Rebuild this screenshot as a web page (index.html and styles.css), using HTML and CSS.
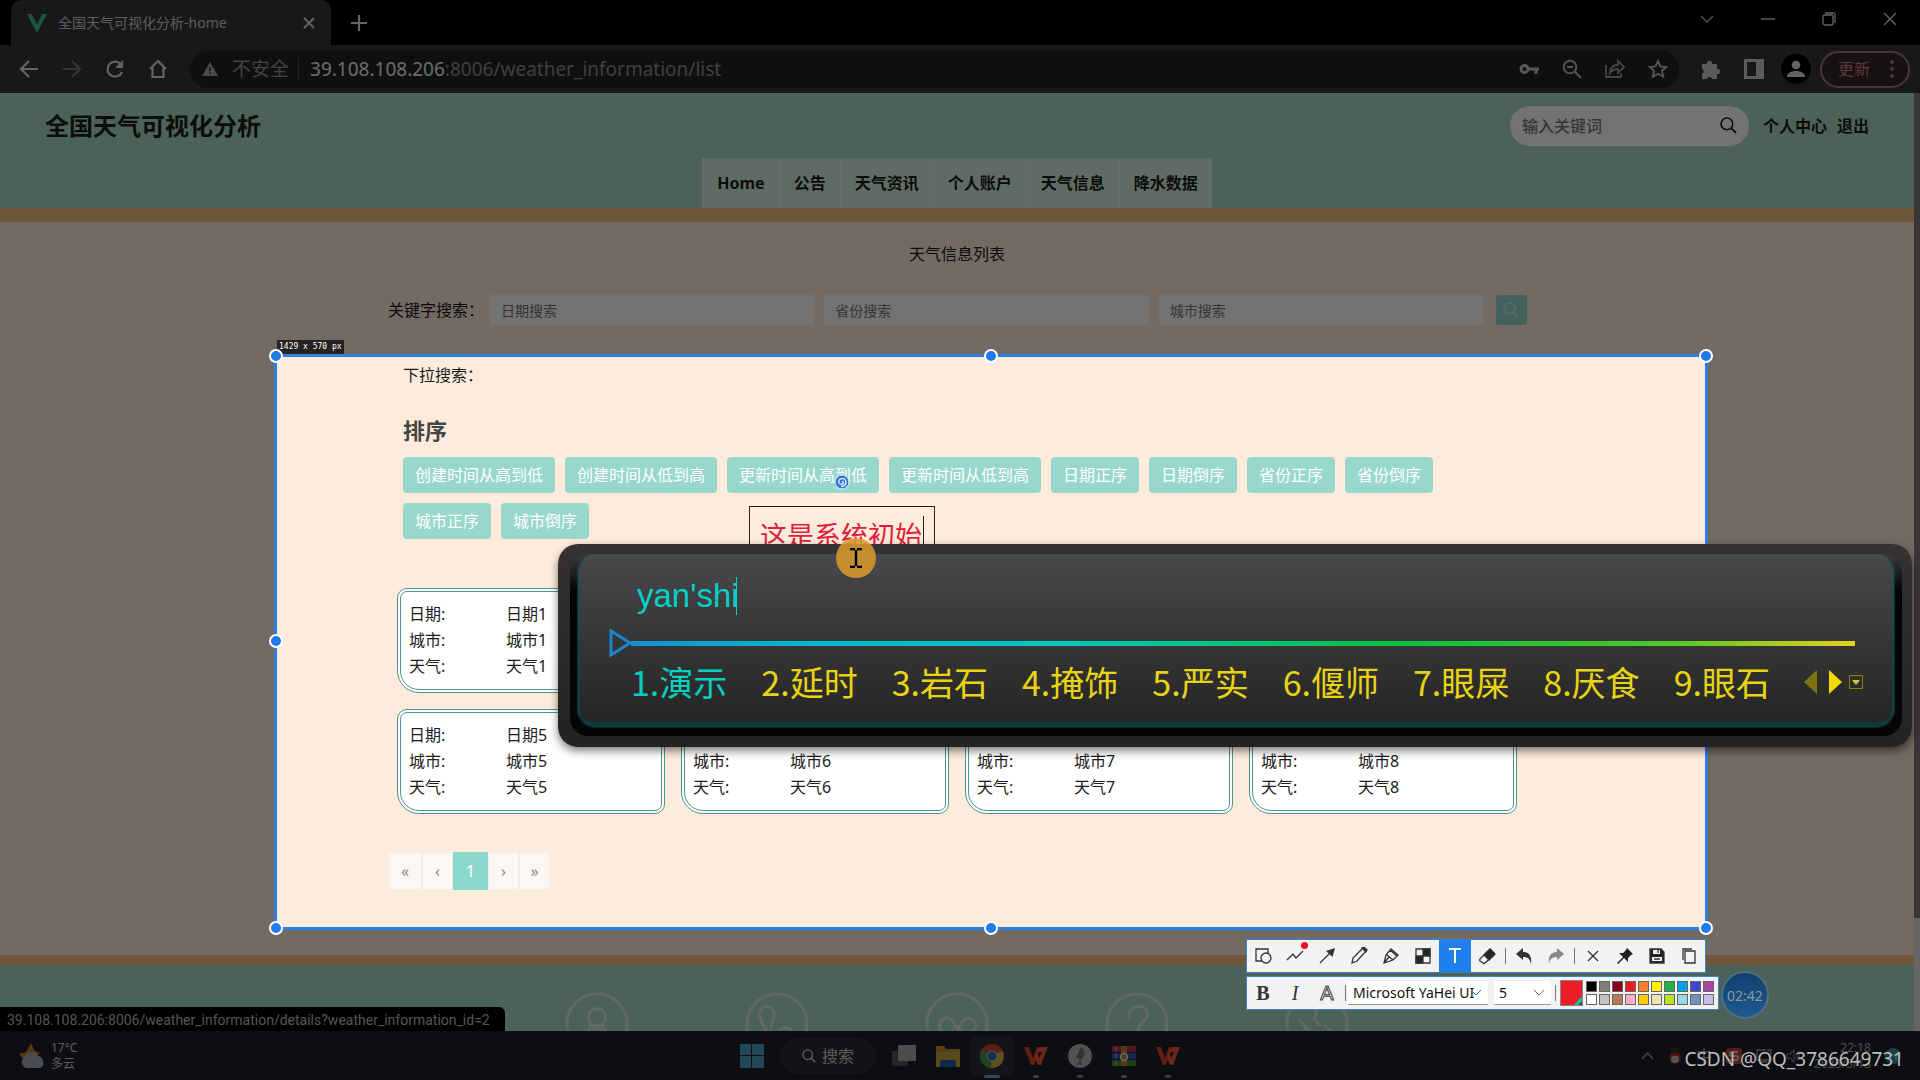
FILE: index.html
```html
<!DOCTYPE html>
<html lang="zh-CN">
<head>
<meta charset="utf-8">
<meta name="viewport" content="width=device-width, initial-scale=1">
<title>全国天气可视化分析-home</title>
<link rel="stylesheet" href="styles.css">
</head>
<body>
<svg class="defs" aria-hidden="true">
  <symbol id="wps" viewBox="0 0 24 20"><path d="M0 1h5l4 11 4-11h4l-7 18H7z" fill="#d8402c"/><path d="M13 6l4-5h7l-7 18h-3l-3-7 2-6 2 6 3-6z" fill="#ee5a3a"/></symbol>
  <symbol id="glass" viewBox="0 0 16 16"><circle cx="6.500" cy="6.500" r="5.500" fill="none" stroke="currentColor" stroke-width="1.500"/><path d="M10.500 10.500L15 15" stroke="currentColor" stroke-width="1.800"/></symbol>
</svg>

<header class="chrome">
  <div class="tabstrip">
    <div class="tab">
      <svg width="20" height="20" viewBox="0 0 20 20"><path d="M0 1h5l5 10 5-10h5L10 20z" fill="#3fb984"/><path d="M5 1h3l2 4 2-4h3l-5 10z" fill="#35363a"/></svg>
      <span class="tab-title">全国天气可视化分析-home</span>
      <button class="icon-btn" aria-label="关闭标签页"><svg width="12" height="12" viewBox="0 0 12 12"><path d="M1 1l10 10M11 1L1 11" stroke="#ddd" stroke-width="2"/></svg></button>
    </div>
    <button class="icon-btn new-tab" aria-label="新标签页"><svg width="16" height="16" viewBox="0 0 16 16"><path d="M8 0v16M0 8h16" stroke="#ddd" stroke-width="2.200"/></svg></button>
    <div class="win-controls">
      <button class="icon-btn" aria-label="搜索标签页"><svg width="14" height="14" viewBox="0 0 14 14"><path d="M1 4l6 6 6-6" fill="none" stroke="#bbb" stroke-width="1.400"/></svg></button>
      <button class="icon-btn" aria-label="最小化"><svg width="14" height="14" viewBox="0 0 14 14"><path d="M0 7h14" stroke="#ddd" stroke-width="1.400"/></svg></button>
      <button class="icon-btn" aria-label="还原"><svg width="14" height="14" viewBox="0 0 14 14"><rect x="1" y="3" width="10" height="10" rx="2" fill="none" stroke="#ddd" stroke-width="1.300"/><path d="M3 1h8q2 0 2 2v8" fill="none" stroke="#ddd" stroke-width="1.300"/></svg></button>
      <button class="icon-btn" aria-label="关闭"><svg width="14" height="14" viewBox="0 0 14 14"><path d="M1 1l12 12M13 1L1 13" stroke="#ddd" stroke-width="1.400"/></svg></button>
    </div>
  </div>
  <div class="toolbar">
    <div class="nav-buttons">
      <button class="icon-btn" aria-label="后退"><svg width="20" height="20" viewBox="0 0 20 20"><path d="M19 10H2M10 2l-8 8 8 8" fill="none" stroke="#ddd" stroke-width="2.200"/></svg></button>
      <button class="icon-btn" aria-label="前进"><svg width="20" height="20" viewBox="0 0 20 20"><path d="M1 10h16M10 2l8 8-8 8" fill="none" stroke="#77787c" stroke-width="2.200"/></svg></button>
      <button class="icon-btn" aria-label="刷新"><svg width="20" height="20" viewBox="0 0 20 20"><path d="M17 13a7.500 7.500 0 1 1-1-7.500" fill="none" stroke="#ddd" stroke-width="2.200"/><path d="M18 1v8h-8z" fill="#ddd"/></svg></button>
      <button class="icon-btn" aria-label="主页"><svg width="20" height="20" viewBox="0 0 20 20"><path d="M2 10l8-8 8 8M4.500 8.500V18h11V8.500" fill="none" stroke="#ddd" stroke-width="2.200"/></svg></button>
    </div>
    <div class="omnibox">
      <svg width="16" height="14" viewBox="0 0 16 14"><path d="M8 0l8 14H0z" fill="#aaa"/><path d="M8 5v4M8 10.500v1.500" stroke="#202124" stroke-width="1.500"/></svg>
      <span class="insecure">不安全</span>
      <span class="url"><b>39.108.108.206</b>:8006/weather_information/list</span>
      <button class="icon-btn" aria-label="密码"><svg width="20" height="14" viewBox="0 0 20 14"><circle cx="5.500" cy="7" r="3.500" fill="none" stroke="#c4c4c4" stroke-width="3"/><path d="M9 7h11M17 7v5" stroke="#c4c4c4" stroke-width="3"/></svg></button>
      <button class="icon-btn" aria-label="缩小"><svg width="20" height="20" viewBox="0 0 20 20"><circle cx="8" cy="8" r="6.300" fill="none" stroke="#b4b4b4" stroke-width="2"/><path d="M5 8h6M13 13l6 6" stroke="#b4b4b4" stroke-width="2"/></svg></button>
      <button class="icon-btn" aria-label="分享"><svg width="20" height="20" viewBox="0 0 20 20"><path d="M1 6v12h15v-4" fill="none" stroke="#999" stroke-width="1.800"/><path d="M5 14c0-5 3-8 8-8V2l6 6-6 6v-4c-4 0-6 1-8 4z" fill="none" stroke="#999" stroke-width="1.800"/></svg></button>
      <button class="icon-btn" aria-label="收藏"><svg width="20" height="20" viewBox="0 0 20 20"><path d="M10 2l2.400 5.400 5.900.6-4.400 3.900 1.300 5.800L10 14.700l-5.200 3 1.300-5.800L1.700 8l5.900-.6z" fill="none" stroke="#c4c4c4" stroke-width="1.800"/></svg></button>
    </div>
    <div class="ext">
      <button class="icon-btn" aria-label="扩展程序"><svg width="20" height="20" viewBox="0 0 20 20"><path d="M1 5h5a2.600 2.600 0 1 1 5 0h5v5a2.600 2.600 0 1 1 0 5v5h-5a2.600 2.600 0 0 0-5 0H1v-5a2.600 2.600 0 0 0 0-5z" fill="#c8c8c8"/></svg></button>
      <button class="icon-btn" aria-label="侧边栏"><svg width="20" height="20" viewBox="0 0 20 20"><path d="M0 0h20v20H0zM3 3v14h9V3z" fill="#ccc" fill-rule="evenodd"/></svg></button>
      <button class="icon-btn avatar" aria-label="用户"><svg width="18" height="18" viewBox="0 0 18 18"><circle cx="9" cy="5" r="4.300" fill="#ddd"/><path d="M0 17c0-8 18-8 18 0z" fill="#ddd"/></svg></button>
      <button class="update">更新<svg width="4" height="18" viewBox="0 0 4 18"><g fill="#b07a78"><circle cx="2" cy="2" r="2"/><circle cx="2" cy="9" r="2"/><circle cx="2" cy="16" r="2"/></g></svg></button>
    </div>
  </div>
</header>

<div class="viewport">
  <div class="page">
    <header class="site-head">
      <div class="site-top">
        <h1>全国天气可视化分析</h1>
        <form class="site-search">
          <input type="search" placeholder="输入关键词" aria-label="输入关键词">
          <button class="icon-btn" aria-label="搜索"><svg width="17" height="17"><use href="#glass"/></svg></button>
        </form>
        <a href="#me">个人中心</a>
        <a href="#exit">退出</a>
      </div>
      <nav class="site-nav">
        <a href="#home">Home</a><a href="#notice">公告</a><a href="#news">天气资讯</a><a href="#account">个人账户</a><a href="#weather">天气信息</a><a href="#rain">降水数据</a>
      </nav>
    </header>

    <main class="content">
      <h2 class="list-title">天气信息列表</h2>
      <form class="filters">
        <span class="filter-label">关键字搜索：</span>
        <input type="text" placeholder="日期搜索" aria-label="日期搜索">
        <input type="text" placeholder="省份搜索" aria-label="省份搜索">
        <input type="text" placeholder="城市搜索" aria-label="城市搜索">
        <button class="go" aria-label="搜索"><svg width="16" height="16"><use href="#glass"/></svg></button>
      </form>
      <section class="sorting">
        <p class="dropdown-label">下拉搜索：</p>
        <h3>排序</h3>
        <div class="sort-buttons">
          <button>创建时间从高到低</button><button>创建时间从低到高</button><button>更新时间从高到低</button><button>更新时间从低到高</button><button>日期正序</button><button>日期倒序</button><button>省份正序</button><button>省份倒序</button><button>城市正序</button><button>城市倒序</button>
        </div>
      </section>
      <section class="cards">
        <a class="card" href="#1"><span>日期:</span><span>日期1</span><span>城市:</span><span>城市1</span><span>天气:</span><span>天气1</span></a>
        <a class="card" href="#2"></a>
        <a class="card" href="#3"></a>
        <a class="card" href="#4"></a>
        <a class="card" href="#5"><span>日期:</span><span>日期5</span><span>城市:</span><span>城市5</span><span>天气:</span><span>天气5</span></a>
        <a class="card lower" href="#6"><span>城市:</span><span>城市6</span><span>天气:</span><span>天气6</span></a>
        <a class="card lower" href="#7"><span>城市:</span><span>城市7</span><span>天气:</span><span>天气7</span></a>
        <a class="card lower" href="#8"><span>城市:</span><span>城市8</span><span>天气:</span><span>天气8</span></a>
      </section>
      <nav class="pager" aria-label="分页">
        <button>«</button><button>‹</button><button class="current">1</button><button>›</button><button>»</button>
      </nav>
    </main>

    <footer class="site-foot">
      <svg viewBox="0 0 66 66"><circle cx="33" cy="33" r="31"/><circle cx="33" cy="26" r="9"/><path d="M27 34l-3 8M39 34l3 8M28 38h10"/></svg>
      <svg viewBox="0 0 66 66"><circle cx="33" cy="33" r="31"/><path d="M28 39c-4-6 3-9 2-17-1-6-9-10-13-5-6 8 4 25 16 33M36 40c3-5 8-4 12 0"/></svg>
      <svg viewBox="0 0 66 66"><circle cx="33" cy="33" r="31"/><path d="M33 54L17 40c-5-8 1-14 7-13 5 1 6 7 10 11 3-4 5-11 10-11 7 0 11 7 6 13zM34 38l6 4"/></svg>
      <svg viewBox="0 0 66 66"><circle cx="33" cy="33" r="31"/><path d="M24 27c0-16 20-15 20-4 0 7-10 7-10 19"/></svg>
      <svg viewBox="0 0 66 66"><circle cx="33" cy="33" r="31"/><path d="M14 28l10 12M26 15c8 2 8 8 4 12l6 8M40 34l12 10"/></svg>
    </footer>
  </div>
  <div class="scrollbar"><div class="thumb"></div></div>
  <div class="status-bubble">39.108.108.206:8006/weather_information/details?weather_information_id=2</div>
</div>

<footer class="taskbar">
  <div class="weather">
    <svg width="26" height="26" viewBox="0 0 26 26"><path d="M12 0l3 7 6 3-10 10L6 18 0 11l7-2z" fill="#c47a20"/><path d="M7 25a6 6 0 0 1-1-11 7 7 0 0 1 13-1c6 0 8 12 1 12z" fill="#a3a8b8"/></svg>
    <div>17°C<br>多云</div>
  </div>
  <div class="apps">
    <button class="icon-btn" aria-label="开始"><svg width="24" height="24" viewBox="0 0 24 24"><path d="M0 0h11v11H0zM12 0h12v11H12zM0 12h11v12H0zM12 12h12v12H12z" fill="#4b9fb8"/></svg></button>
    <button class="task-search"><svg width="14" height="14"><use href="#glass"/></svg>搜索</button>
    <button class="icon-btn" aria-label="任务视图"><svg width="24" height="24" viewBox="0 0 24 24"><path d="M0 7h16v15H0z" fill="#555"/><path d="M6 1h18v16H6z" fill="#aaa"/></svg></button>
    <button class="icon-btn" aria-label="文件资源管理器"><svg width="24" height="24" viewBox="0 0 24 24"><path d="M0 2h8l2 3h14v18H0z" fill="#bd9130"/><path d="M0 8h24v15H0z" fill="#c4a244"/><path d="M4 23v-4q0-3 3-3h10q3 0 3 3v4z" fill="#1f62a0"/></svg></button>
    <button class="icon-btn active" aria-label="Chrome"><svg width="24" height="24" viewBox="0 0 24 24"><circle cx="12" cy="12" r="12" fill="#d04535"/><path d="M12 12L2 5.500A12 12 0 0 0 11 24z" fill="#3d9a4e"/><path d="M12 12l10.800-5A12 12 0 0 1 11 24z" fill="#d8b23c"/><circle cx="12" cy="12" r="5.500" fill="#ccc"/><circle cx="12" cy="12" r="4.500" fill="#286ac0"/></svg></button>
    <button class="icon-btn open" aria-label="WPS"><svg width="24" height="20"><use href="#wps"/></svg></button>
    <button class="icon-btn open" aria-label="录屏"><svg width="24" height="24" viewBox="0 0 24 24"><circle cx="12" cy="12" r="12" fill="#b4b4b4"/><path d="M13 3c4 2 5 7 2 11l-3 1-4-1c0-3 1-4 3-5z" fill="#6b7878"/><path d="M12 5v15M9 20h5" stroke="#455" fill="none"/></svg></button>
    <button class="icon-btn open" aria-label="WinRAR"><svg width="24" height="20" viewBox="0 0 24 20"><path d="M0 0h24v6H0z" fill="#b03050"/><path d="M0 7h24v6H0z" fill="#3b4fa8"/><path d="M0 14h24v6H0z" fill="#3f8a3d"/><path d="M9 0h6v20H9z" fill="#b8862a"/><circle cx="12" cy="11" r="3.500" fill="none" stroke="#ddd" stroke-width="1.500"/><path d="M4 1v4M4 8v4M4 15v4" stroke="#ccc"/></svg></button>
    <button class="icon-btn open" aria-label="WPS 文档"><svg width="24" height="20"><use href="#wps"/></svg></button>
  </div>
  <div class="tray">
    <svg width="13" height="8" viewBox="0 0 13 8"><path d="M1 7l5.500-6L12 7" fill="none" stroke="#999" stroke-width="1.500"/></svg>
    <svg width="14" height="16" viewBox="0 0 14 16"><ellipse cx="7" cy="10" rx="6" ry="6" fill="#7a2a22"/><ellipse cx="7" cy="11" rx="4" ry="4" fill="#bbb"/><path d="M3 0h8v5H3z" fill="#333"/><path d="M2 7h10" stroke="#c22" stroke-width="2"/></svg>
    <span class="lang">中</span>
    <svg width="16" height="16" viewBox="0 0 16 16"><rect width="16" height="16" rx="3" fill="#b2492a"/><path d="M12 4H6q-2 0-2 2t2 2h4q2 0 2 2t-2 2H4" fill="none" stroke="#ccc" stroke-width="2"/></svg>
    <svg width="16" height="14" viewBox="0 0 16 14"><path d="M10 1H1v10h14V7M5 13h6M12 1h3v4h-3z" fill="none" stroke="#999" stroke-width="1.300"/></svg>
    <svg width="14" height="14" viewBox="0 0 14 14"><path d="M1 5h3l4-4v12L4 9H1zM10 4q2 3 0 6M12 2q3 5 0 10" fill="none" stroke="#777" stroke-width="1.300"/></svg>
    <div class="clock">22:18<br>2023/5/13</div>
    <svg width="16" height="16" viewBox="0 0 16 16"><circle cx="8" cy="8" r="8" fill="#2f8ea0"/><path d="M5 12V7h6v5" fill="none" stroke="#9cc" stroke-width="1.500"/></svg>
  </div>
</footer>

<!-- screen capture layer -->
<div class="selection">
  <span class="size">1429 x 570  px</span>
  <i class="h tl"></i><i class="h tc"></i><i class="h tr"></i><i class="h ml"></i><i class="h bl"></i><i class="h bc"></i><i class="h br"></i>
</div>
<svg class="swirl" width="16" height="16" viewBox="0 0 16 16"><circle cx="8" cy="8" r="7" fill="#2e77d8" stroke="#eaf4fb"/><path d="M8 8q2-1 1 1.500-2 2-4-.5-1-4 3-4.500 4 0 4 4-1 4-5 4" fill="none" stroke="#fff" stroke-width="1.200"/></svg>
<div class="note"><input type="text" value="这是系统初始" aria-label="标注文字"><i></i></div>

<div class="capture">
  <div class="bar tools">
    <button aria-label="形状"><svg viewBox="0 0 18 18"><path d="M8 14H2V2h12v5" /><circle cx="12" cy="11" r="5"/></svg></button>
    <button class="dot" aria-label="折线"><svg viewBox="0 0 18 18"><path d="M1 13l6-6 3 4 7-7"/></svg></button>
    <button aria-label="箭头"><svg viewBox="0 0 18 18"><path d="M2 16L13 5"/><path d="M17 1l-2.500 9L8 4z" fill="#333" stroke="none"/></svg></button>
    <button aria-label="铅笔"><svg viewBox="0 0 18 18"><path d="M2 16l1-5L13 1l3 3L7 14z"/><path d="M12 1l4 4 1-2-3-3z" fill="#333"/></svg></button>
    <button aria-label="荧光笔"><svg viewBox="0 0 18 18"><path d="M2 16l2-8 5-6 7 6-5 5zM2 16l5-6M8 3l7 6M5 8l6 5"/></svg></button>
    <button aria-label="马赛克"><svg viewBox="0 0 18 18"><path d="M2 2h14v14H2z"/><path d="M9 2h7v7H9zM2 9h7v7H2z" fill="#222"/></svg></button>
    <button class="on" aria-label="文字"><svg viewBox="0 0 18 18"><path d="M3 2h12M9 2v14"/></svg></button>
    <button aria-label="橡皮"><svg viewBox="0 0 18 18"><path d="M2 12l9-9q1-1 2 0l3 3q1 1 0 2l-9 8q-1 1-2 0l-3-2q-1-1 0-2z"/><path d="M6 8l6-6 5 5-6 6z" fill="#222"/></svg></button>
    <span class="sep"></span>
    <button aria-label="撤销"><svg viewBox="0 0 18 18"><path d="M1 7l7-6v4c6 0 9 4 8 12-1-5-3-7-8-7v3z" fill="#333" stroke="none"/></svg></button>
    <button aria-label="重做"><svg viewBox="0 0 18 18"><path d="M17 7l-7-6v4C4 5 1 9 2 17c1-5 3-7 8-7v3z" fill="#888" stroke="none"/></svg></button>
    <span class="sep"></span>
    <button aria-label="关闭"><svg viewBox="0 0 18 18"><path d="M4 4l10 10M14 4L4 14"/></svg></button>
    <button aria-label="固定"><svg viewBox="0 0 18 18"><path d="M11 1l6 6-2 1-3 3v4L8 11l-6 6-1-1 6-6-4-4h4l3-3z" fill="#222" stroke="none"/></svg></button>
    <button aria-label="保存"><svg viewBox="0 0 18 18"><path d="M2 2h11l3 3v11H2z" fill="#222"/><path d="M5 3h7v4H5zM4 10h10v4H4z" fill="#f0f0f0" stroke="none"/><path d="M10 3v3M6 12h6"/></svg></button>
    <button aria-label="复制"><svg viewBox="0 0 18 18"><path d="M5 4h10v12H5zM3 13V2h9"/></svg></button>
  </div>
  <div class="bar styles">
    <button class="bold" aria-label="粗体">B</button>
    <button class="ital" aria-label="斜体">I</button>
    <button class="outl" aria-label="描边">A</button>
    <span class="sep"></span>
    <span class="pick font"><select aria-label="字体"><option>Microsoft YaHei UI</option></select><svg width="12" height="8" viewBox="0 0 12 8"><path d="M1 1l5 5 5-5" fill="none" stroke="#666"/></svg></span>
    <span class="pick num"><select aria-label="字号"><option>5</option></select><svg width="12" height="8" viewBox="0 0 12 8"><path d="M1 1l5 5 5-5" fill="none" stroke="#666"/></svg></span>
    <span class="sep"></span>
    <button class="color" aria-label="当前颜色"></button>
    <div class="swatches">
      <i class="c1"></i><i class="c2"></i><i class="c3"></i><i class="c4"></i><i class="c5"></i><i class="c6"></i><i class="c7"></i><i class="c8"></i><i class="c9"></i><i class="c10"></i>
      <i class="c11"></i><i class="c12"></i><i class="c13"></i><i class="c14"></i><i class="c15"></i><i class="c16"></i><i class="c17"></i><i class="c18"></i><i class="c19"></i><i class="c20"></i>
    </div>
  </div>
</div>
<div class="timer">02:42</div>

<!-- input method window -->
<div class="ime">
  <div class="ime-well">
    <div class="ime-panel">
      <div class="compose"><input type="text" value="yan'shi" aria-label="拼音"><i></i></div>
      <div class="rule"><svg width="24" height="30" viewBox="0 0 24 30"><path d="M2 3l19 12L2 27z" fill="none" stroke="#1c86c8" stroke-width="3"/></svg><hr></div>
      <div class="cands">
        <button class="first">1.演示</button><button>2.延时</button><button>3.岩石</button><button>4.掩饰</button><button>5.严实</button><button>6.偃师</button><button>7.眼屎</button><button>8.厌食</button><button>9.眼石</button>
        <svg width="60" height="26" viewBox="0 0 60 26"><path d="M13 1v24L0 13z" fill="#7c7410"/><path d="M25 1v24l13-12z" fill="#f2dc00"/><path d="M45.500 6.500h13v13h-13z" fill="none" stroke="#8a8010"/><path d="M48 11h8l-4 5z" fill="#e0cc10"/></svg>
      </div>
    </div>
  </div>
</div>
<div class="pointer"><svg width="12" height="20" viewBox="0 0 12 20"><path d="M0 1h5M7 1h5M0 19h5M7 19h5M6 2v16" stroke="#000" stroke-width="2.500" fill="none"/></svg></div>
<div class="watermark">CSDN @QQ_3786649731</div>
</body>
</html>
```
FILE: styles.css
```css
* { box-sizing: border-box; }
html, body { margin: 0; height: 100%; }
body {
  position: relative;
  display: flex;
  flex-direction: column;
  height: 100vh;
  overflow: hidden;
  background: #000;
  color: #1c1c1c;
  font: 16px/24px "Noto Sans", "Noto Sans CJK SC", sans-serif;
}
button, input, select { font: inherit; color: inherit; margin: 0; padding: 0; border: 0; background: none; }
h1, h2, h3, p { margin: 0; }
a { color: inherit; text-decoration: none; }
svg { display: block; flex: none; }
.defs { position: absolute; width: 0; height: 0; }
.icon-btn { display: flex; align-items: center; justify-content: center; flex: none; }

/* browser frame */
.chrome { flex: none; color: #ddd; }
.tabstrip { display: flex; height: 45px; background: #000; padding-left: 11px; }
.tab { display: flex; align-items: center; gap: 11px; width: 320px; padding: 0 16px; background: #35363a; border-radius: 10px 10px 0 0; }
.tab-title { flex: 1; font-size: 14px; color: #ccc; }
.new-tab { width: 56px; }
.win-controls { display: flex; margin-left: auto; height: 38px; }
.win-controls .icon-btn { width: 61px; }
.toolbar { display: flex; align-items: center; height: 48px; background: #35363a; padding-right: 10px; }
.nav-buttons { display: flex; padding-left: 7px; width: 190px; }
.nav-buttons .icon-btn { width: 43px; }
.omnibox { flex: 1; display: flex; align-items: center; height: 37px; padding: 0 11px 0 12px; border-radius: 18px; background: #202323; }
.insecure { margin-left: 14px; padding-right: 9px; font-size: 19px; color: #949494; border-right: 1px solid #555; }
.url { flex: 1; margin-left: 11px; font-size: 19px; color: #8d8d8d; }
.url b { font-weight: 400; color: #eee; }
.omnibox .icon-btn { width: 43px; }
.omnibox .icon-btn:last-child { width: 20px; margin-left: 12px; }
.ext { display: flex; align-items: center; padding-left: 10px; }
.ext .icon-btn { width: 43px; }
.ext .avatar { width: 30px; height: 30px; margin-left: 6px; background: #000; border-radius: 50%; }
.update { display: flex; align-items: center; gap: 20px; width: 90px; height: 37px; margin-left: 9px; padding-left: 16px; border: 2px solid #a87875; border-radius: 19px; color: #cb7e7b; background: #332726; }

/* page */
.viewport { position: relative; flex: 1; min-height: 0; display: flex; overflow: hidden; }
.page { flex: 1; background: #fdecdc; }
.scrollbar { width: 6px; background: #e0e0e0; }
.thumb { height: 88%; background: #7e787c; }
.site-head { height: 129px; background: #a8d9c3; border-bottom: 14px solid #f8c184; }
.site-top { display: flex; align-items: center; height: 65px; padding: 0 45px; gap: 10px; font-weight: 500; }
.site-top h1 { flex: 1; font-size: 24px; line-height: 32px; }
.site-top a { font-weight: 600; }
.site-search { display: flex; align-items: center; width: 239px; height: 40px; margin-right: 4px; padding: 0 12px; border-radius: 20px; background: #fff; }
.site-search input { flex: 1; min-width: 0; outline: 0; }
.site-search input::placeholder { color: #757575; }
.site-nav { display: flex; justify-content: center; height: 50px; }
.site-nav a { padding: 0 14px; line-height: 50px; font-weight: 700; background: #d3efe0; border-left: 1px solid #e6f6ee; }
.content { width: 1140px; max-width: 100%; margin: 0 auto; height: 733px; }
.list-title { padding-top: 20px; font-size: 16px; line-height: 24px; font-weight: 400; text-align: center; }
.filters { display: flex; align-items: center; gap: 10px; height: 30px; margin-top: 29px; padding-left: 1px; }
.filter-label { width: 92px; white-space: nowrap; }
.filters input { flex: 1; min-width: 0; height: 30px; padding: 0 11px; background: #fff; font-size: 14px; }
.filters input::placeholder { color: #757575; }
.go { display: flex; align-items: center; justify-content: center; width: 31px; height: 30px; margin-left: 3px; background: #98d8cc; color: #c8eee6; border-radius: 2px; }
.sorting { padding: 38px 14px 0 16px; }
.sorting h3 { margin-top: 27px; font-size: 22px; line-height: 32px; color: #444; }
.sort-buttons { display: flex; flex-wrap: wrap; gap: 10px; margin-top: 11px; }
.sort-buttons button { height: 36px; padding: 0 12px; color: #fff; background: #98d8cc; border-radius: 4px; }
.cards { display: grid; grid-template-columns: repeat(4, 1fr); gap: 16px; padding: 49px 10px 0; }
.card { display: grid; grid-template-columns: 97px 1fr; align-content: start; height: 105px; padding: 9px 8px 10px; border: 4px double #4f948e; border-radius: 10px 10px 10px 22px; background: #fff; line-height: 26px; }
.card.lower { align-content: end; }
.pager { display: flex; margin-top: 38px; padding-left: 1px; }
.pager button { width: 31px; height: 38px; background: #fdf7f3; border: 1px solid #f6ece6; color: #8a8a8a; }
.pager button:first-child { width: 34px; }
.pager .current { width: 35px; background: #8ad7cb; border-color: #8ad7cb; color: #fff; }
.site-foot { display: flex; justify-content: center; gap: 116px; height: 120px; padding-top: 27px; background: #a8d9c3; border-top: 10px solid #f8c184; }
.site-foot svg { width: 64px; height: 64px; fill: none; stroke: #dbe8e1; stroke-width: 3; }
.status-bubble { position: absolute; left: 0; bottom: 0; width: 505px; height: 24px; padding: 0 7px; font: 14px/26px Roboto, sans-serif; white-space: nowrap; color: #bbb; background: #000; border-top-right-radius: 6px; }

/* taskbar */
.taskbar { flex: none; display: grid; grid-template-columns: 1fr auto 1fr; align-items: center; height: 49px; padding: 0 19px; background: #1e2029; color: #ccc; font-size: 12px; line-height: 16px; }
.weather { display: flex; align-items: center; gap: 6px; }
.apps { display: flex; align-items: center; }
.apps .icon-btn { position: relative; width: 44px; height: 40px; }
.apps .open::after, .apps .active::after { content: ""; position: absolute; bottom: -2px; width: 6px; height: 3px; border-radius: 2px; background: #888; }
.apps .active { background: #2b2d36; border-radius: 4px; }
.apps .active::after { width: 16px; background: #5aa0d8; }
.task-search { display: flex; align-items: center; justify-content: center; gap: 6px; width: 96px; height: 36px; margin: 0 6px; border-radius: 18px; background: #2a2c36; font-size: 16px; }
.tray { display: flex; align-items: center; justify-content: flex-end; gap: 14px; color: #aaa; }
.lang { font-size: 16px; }
.clock { text-align: right; }

/* screen capture */
.selection { position: absolute; left: 274px; top: 354px; width: 1434px; height: 576px; border: 3px solid #2b7fe6; box-shadow: 0 0 0 2000px rgba(0, 0, 0, .55); pointer-events: none; }
.size { position: absolute; left: 0; top: -17px; height: 14px; padding: 0 2px; font: 8px/14px "DejaVu Sans Mono", monospace; white-space: nowrap; color: #fff; background: #26221f; }
.h { position: absolute; width: 14px; height: 14px; margin: -8px; border: 2px solid #fff; border-radius: 50%; background: #1f7bea; }
.tl, .tc, .tr { top: 0; }
.ml { top: 50%; }
.bl, .bc, .br { top: 100%; margin-top: -6px; }
.tl, .ml, .bl { left: 0; }
.tc, .bc { left: 50%; margin-left: -7px; }
.tr, .br { left: 100%; margin-left: -6px; }
.swirl { position: absolute; left: 834px; top: 474px; }
.note { position: absolute; left: 749px; top: 506px; display: flex; align-items: center; width: 186px; height: 56px; padding-left: 10px; border: 1px solid #222; color: #e0203a; font-size: 27px; line-height: 36px; }
.note input { width: 163px; height: 40px; }
.note i { width: 1px; height: 36px; background: #222; }
.capture { position: absolute; left: 1246px; top: 939px; display: flex; flex-direction: column; align-items: flex-start; gap: 3px; color: #333; }
.bar { display: flex; align-items: center; height: 34px; background: #f2f2f2; border: 1px solid #3c82d0; }
.tools button { position: relative; display: flex; align-items: center; justify-content: center; width: 32px; height: 32px; }
.tools svg { width: 18px; height: 18px; fill: none; stroke: #333; stroke-width: 1.3; }
.tools .on { background: #1f80ec; }
.tools .on svg { stroke: #fff; stroke-width: 2; }
.dot::after { content: ""; position: absolute; right: 3px; top: 2px; width: 7px; height: 7px; border-radius: 50%; background: #f01020; }
.sep { flex: none; width: 1px; height: 16px; margin: 0 2px; background: #777; }
.styles { padding-right: 4px; }
.styles > button { width: 32px; height: 30px; font: 20px/30px "Liberation Serif", serif; }
.styles .bold { font-weight: 700; }
.styles .ital { font-style: italic; }
.styles .outl { color: #f2f2f2; -webkit-text-stroke: 1px #444; font-family: "Liberation Sans", sans-serif; }
.pick { position: relative; display: flex; height: 24px; background: #fff; border-bottom: 1px solid #999; }
.pick select { appearance: none; width: 100%; padding-left: 5px; padding-right: 8px; font-size: 14px; line-height: 22px; color: #111; overflow: hidden; }
.pick svg { position: absolute; right: 6px; top: 8px; }
.font { width: 140px; }
.num { width: 57px; margin: 0 2px 0 6px; }
.styles > .color { width: 23px; height: 26px; margin: 0 3px 0 2px; border: 1px solid #888; background: linear-gradient(135deg, #ee1c25 82%, #20b8d0 82%, #30c040 92%, #3030c0 92%); }
.swatches { display: grid; grid-template-columns: repeat(10, 11px); gap: 2px; }
.swatches i { height: 11px; border: 1px solid #666; }
.c1 { background: #000; } .c2 { background: #7f7f77; } .c3 { background: #880015; } .c4 { background: #ed1c24; } .c5 { background: #ff7f27; }
.c6 { background: #fff200; } .c7 { background: #22b14c; } .c8 { background: #00a2e8; } .c9 { background: #3f48cc; } .c10 { background: #a349a4; }
.c11 { background: #fff; } .c12 { background: #c3c3c3; } .c13 { background: #b97a57; } .c14 { background: #ffaec9; } .c15 { background: #ffc90e; }
.c16 { background: #efe4b0; } .c17 { background: #b5e61d; } .c18 { background: #99d9ea; } .c19 { background: #7092be; } .c20 { background: #c8bfe7; }
.timer { position: absolute; left: 1721px; top: 971px; width: 48px; height: 48px; border: 2px solid #4f6f80; border-radius: 50%; background: linear-gradient(#123f6c, #1d5a90); color: #8a98a6; font-size: 14px; line-height: 46px; text-align: center; }

/* input method */
.ime { position: absolute; left: 558px; top: 544px; width: 1354px; height: 203px; padding: 10px 10px 11px 12px; border-radius: 20px; background: linear-gradient(#353231, #232323); box-shadow: 0 4px 8px rgba(0, 0, 0, .5); }
.ime-well { height: 100%; padding: 1px 8px 9px; border-radius: 18px; background: linear-gradient(#3a3a3a, #050505 20%, #050505); }
.ime-panel { height: 172px; padding-top: 16px; border: 1px solid #14504f; border-top-color: #4c5452; border-bottom: 5px solid #14393b; border-radius: 18px; background: linear-gradient(#484848, #252525); box-shadow: 0 0 2px #109090; }
.compose { display: flex; align-items: center; height: 48px; padding-left: 58px; color: #04cfca; font: 33px/48px "Liberation Sans", sans-serif; }
.compose input { width: 99px; height: 48px; }
.compose i { width: 1px; height: 38px; background: #04cfca; }
.rule { display: flex; align-items: center; height: 30px; margin: 8px 38px 0 30px; }
.rule hr { flex: 1; height: 5px; margin: 0 0 0 -2px; border: 0; background: linear-gradient(90deg, #1590d0, #08b8cc 15%, #08c8c0 35%, #08c040 62%, #50c828 85%, #e8d020); }
.cands { display: flex; align-items: center; gap: 34px; height: 48px; padding-left: 52px; color: #e8d414; font-size: 34px; line-height: 48px; }
.cands button { flex: none; white-space: nowrap; font-family: "Noto Sans CJK SC", sans-serif; }
.cands .first { color: #04cfc0; }
.pointer { position: absolute; left: 836px; top: 538px; display: flex; align-items: center; justify-content: center; width: 40px; height: 40px; border-radius: 50%; background: rgba(218, 152, 44, .88); }
.watermark { position: absolute; right: 16px; bottom: 7px; color: #bdbdbd; font: 19px/28px "Noto Sans", sans-serif; }
```
